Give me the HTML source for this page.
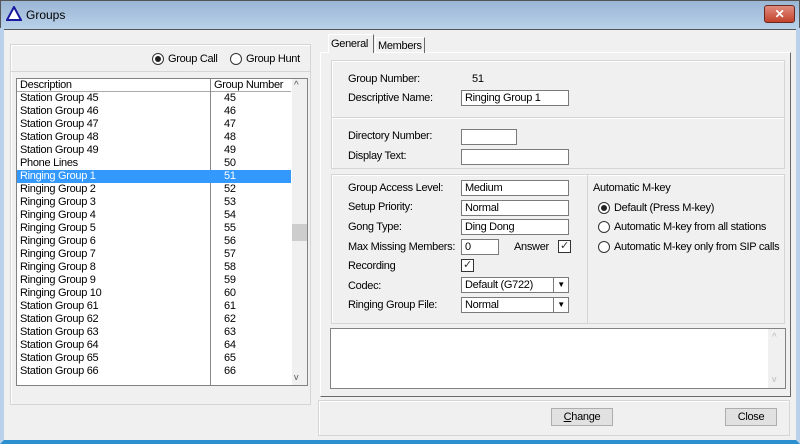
<!DOCTYPE html>
<html><head><style>
*{box-sizing:border-box;margin:0;padding:0}
body{width:800px;height:444px;overflow:hidden;background:#f0f0f0;font-family:"Liberation Sans",sans-serif;font-size:11px;letter-spacing:-0.3px;color:#000;position:relative}
.a{position:absolute}
.title{left:0;top:0;width:800px;height:30px;background:linear-gradient(#9ab6d4,#b9d1ea);border:1px solid #555}
.grp{border:1px solid #d5d5d5;box-shadow:inset 1px 1px 0 #fff}
.in{background:#fff;border:1px solid #7a7a7a;padding:1px 3px;height:16px;line-height:13px}
.lbl{line-height:13px;white-space:nowrap}
.rad{width:12px;height:12px;border:1px solid #333;border-radius:50%;background:#fff}
.rad.on::after{content:"";position:absolute;left:2px;top:2px;width:6px;height:6px;border-radius:50%;background:#222}
.chk{width:13px;height:13px;border:1px solid #333;background:#fff;font-size:11px;line-height:11px;text-align:center;color:#333}
.row{position:absolute;left:0;width:274px;height:13px;line-height:13px}
.row span{position:absolute}
.btn{border:1px solid #adadad;background:#e1e1e1;text-align:center;line-height:16px}
.dd{position:absolute;right:0;top:0;width:15px;height:14px;border-left:1px solid #7a7a7a;font-size:8px;text-align:center;line-height:14px}
</style></head><body>
<div class="a title"></div>
<svg class="a" style="left:6px;top:6px" width="16" height="15"><polygon points="8,1 15,14 1,14" fill="#fff" stroke="#1a1aa0" stroke-width="2"/></svg>
<div class="a" style="left:26px;top:8px;font-size:12px;letter-spacing:0">Groups</div>
<div class="a" style="left:764px;top:5px;width:31px;height:18px;border:1px solid #6b2a20;border-radius:3px;background:linear-gradient(#e08d7f,#c3422c);color:#fff;font-weight:bold;text-align:center;line-height:16px;font-size:12px">✕</div>
<div class="a" style="left:0;top:28px;width:800px;height:416px;border:4px solid #b9d1ea;border-top:0;border-bottom:4px solid #2b8fd0"></div>

<div class="a grp" style="left:10px;top:44px;width:301px;height:361px"></div>
<div class="a" style="left:10px;top:71px;width:301px;height:1px;background:#d5d5d5"></div>
<div class="a rad on" style="left:152px;top:53px"></div><div class="a lbl" style="left:168px;top:53px">Group Call</div>
<div class="a rad" style="left:230px;top:53px"></div><div class="a lbl" style="left:246px;top:53px">Group Hunt</div>
<div class="a" style="left:16px;top:78px;width:292px;height:308px;background:#fff;border:1px solid #828282"></div>
<div class="a" style="left:17px;top:79px;width:274px;height:13px;border-bottom:1px solid #aaa"></div>
<div class="a lbl" style="left:20px;top:79px">Description</div>
<div class="a lbl" style="left:214px;top:79px">Group Number</div>
<div class="a" style="left:210px;top:79px;width:1px;height:306px;background:#888"></div>
<div class="a" style="left:292px;top:79px;width:15px;height:306px;background:#f0f0f0"></div>
<div class="a" style="left:294px;top:80px;font-size:10px;color:#555">^</div>
<div class="a" style="left:294px;top:372px;font-size:9px;color:#555">v</div>
<div class="a" style="left:292px;top:224px;width:15px;height:17px;background:#cdcdcd"></div>
<div class="a" style="left:17px;top:92px;width:275px;height:286px">
<div class="row" style="top:0"><span style="left:3px">Station Group 45</span><span style="left:207px">45</span></div>
<div class="row" style="top:13px"><span style="left:3px">Station Group 46</span><span style="left:207px">46</span></div>
<div class="row" style="top:26px"><span style="left:3px">Station Group 47</span><span style="left:207px">47</span></div>
<div class="row" style="top:39px"><span style="left:3px">Station Group 48</span><span style="left:207px">48</span></div>
<div class="row" style="top:52px"><span style="left:3px">Station Group 49</span><span style="left:207px">49</span></div>
<div class="row" style="top:65px"><span style="left:3px">Phone Lines</span><span style="left:207px">50</span></div>
<div class="row" style="top:78px;background:#3399ff;color:#fff"><span style="left:3px">Ringing Group 1</span><span style="left:207px">51</span></div>
<div class="row" style="top:91px"><span style="left:3px">Ringing Group 2</span><span style="left:207px">52</span></div>
<div class="row" style="top:104px"><span style="left:3px">Ringing Group 3</span><span style="left:207px">53</span></div>
<div class="row" style="top:117px"><span style="left:3px">Ringing Group 4</span><span style="left:207px">54</span></div>
<div class="row" style="top:130px"><span style="left:3px">Ringing Group 5</span><span style="left:207px">55</span></div>
<div class="row" style="top:143px"><span style="left:3px">Ringing Group 6</span><span style="left:207px">56</span></div>
<div class="row" style="top:156px"><span style="left:3px">Ringing Group 7</span><span style="left:207px">57</span></div>
<div class="row" style="top:169px"><span style="left:3px">Ringing Group 8</span><span style="left:207px">58</span></div>
<div class="row" style="top:182px"><span style="left:3px">Ringing Group 9</span><span style="left:207px">59</span></div>
<div class="row" style="top:195px"><span style="left:3px">Ringing Group 10</span><span style="left:207px">60</span></div>
<div class="row" style="top:208px"><span style="left:3px">Station Group 61</span><span style="left:207px">61</span></div>
<div class="row" style="top:221px"><span style="left:3px">Station Group 62</span><span style="left:207px">62</span></div>
<div class="row" style="top:234px"><span style="left:3px">Station Group 63</span><span style="left:207px">63</span></div>
<div class="row" style="top:247px"><span style="left:3px">Station Group 64</span><span style="left:207px">64</span></div>
<div class="row" style="top:260px"><span style="left:3px">Station Group 65</span><span style="left:207px">65</span></div>
<div class="row" style="top:273px"><span style="left:3px">Station Group 66</span><span style="left:207px">66</span></div>
</div>

<div class="a" style="left:320px;top:52px;width:471px;height:345px;border:1px solid #fff;border-right-color:#696969;border-bottom-color:#696969"></div>
<div class="a" style="left:328px;top:34px;width:46px;height:19px;border:1px solid #fff;border-right-color:#696969;border-bottom:0;background:#f0f0f0"></div>
<div class="a lbl" style="left:331px;top:38px">General</div>
<div class="a" style="left:375px;top:37px;width:50px;height:16px;border:1px solid #fff;border-right-color:#696969;border-bottom:0"></div>
<div class="a lbl" style="left:378px;top:40px">Members</div>

<div class="a grp" style="left:331px;top:60px;width:454px;height:59px"></div>
<div class="a lbl" style="left:348px;top:73px">Group Number:</div>
<div class="a lbl" style="left:472px;top:73px">51</div>
<div class="a lbl" style="left:348px;top:92px">Descriptive Name:</div>
<div class="a in" style="left:461px;top:90px;width:108px">Ringing Group 1</div>

<div class="a grp" style="left:331px;top:117px;width:454px;height:52px"></div>
<div class="a lbl" style="left:348px;top:130px">Directory Number:</div>
<div class="a in" style="left:461px;top:129px;width:56px"></div>
<div class="a lbl" style="left:348px;top:150px">Display Text:</div>
<div class="a in" style="left:461px;top:149px;width:108px"></div>

<div class="a grp" style="left:331px;top:174px;width:454px;height:150px"></div>
<div class="a" style="left:587px;top:175px;width:1px;height:148px;background:#d5d5d5"></div>
<div class="a lbl" style="left:348px;top:182px">Group Access Level:</div>
<div class="a in" style="left:461px;top:180px;width:108px">Medium</div>
<div class="a lbl" style="left:348px;top:201px">Setup Priority:</div>
<div class="a in" style="left:461px;top:200px;width:108px">Normal</div>
<div class="a lbl" style="left:348px;top:221px">Gong Type:</div>
<div class="a in" style="left:461px;top:219px;width:108px">Ding Dong</div>
<div class="a lbl" style="left:348px;top:241px">Max Missing Members:</div>
<div class="a in" style="left:461px;top:239px;width:38px">0</div>
<div class="a lbl" style="left:514px;top:241px">Answer</div>
<div class="a chk" style="left:558px;top:240px">✓</div>
<div class="a lbl" style="left:348px;top:260px">Recording</div>
<div class="a chk" style="left:461px;top:259px">✓</div>
<div class="a lbl" style="left:348px;top:280px">Codec:</div>
<div class="a in" style="left:461px;top:277px;width:108px">Default (G722)<div class="dd">▼</div></div>
<div class="a lbl" style="left:348px;top:299px">Ringing Group File:</div>
<div class="a in" style="left:461px;top:297px;width:108px">Normal<div class="dd">▼</div></div>
<div class="a lbl" style="left:593px;top:182px">Automatic M-key</div>
<div class="a rad on" style="left:598px;top:202px"></div><div class="a lbl" style="left:614px;top:202px">Default (Press M-key)</div>
<div class="a rad" style="left:598px;top:221px"></div><div class="a lbl" style="left:614px;top:221px">Automatic M-key from all stations</div>
<div class="a rad" style="left:598px;top:241px"></div><div class="a lbl" style="left:614px;top:241px">Automatic M-key only from SIP calls</div>

<div class="a" style="left:330px;top:328px;width:456px;height:61px;background:#fff;border:1px solid #828282"></div>
<div class="a" style="left:768px;top:329px;width:17px;height:59px;background:#f0f0f0"></div>
<div class="a" style="left:772px;top:332px;font-size:10px;color:#bbb">^</div>
<div class="a" style="left:772px;top:374px;font-size:9px;color:#bbb">v</div>

<div class="a grp" style="left:318px;top:400px;width:472px;height:36px"></div>
<div class="a btn" style="left:551px;top:408px;width:62px;height:18px"><u>C</u>hange</div>
<div class="a btn" style="left:725px;top:408px;width:52px;height:18px">Close</div>
</body></html>
